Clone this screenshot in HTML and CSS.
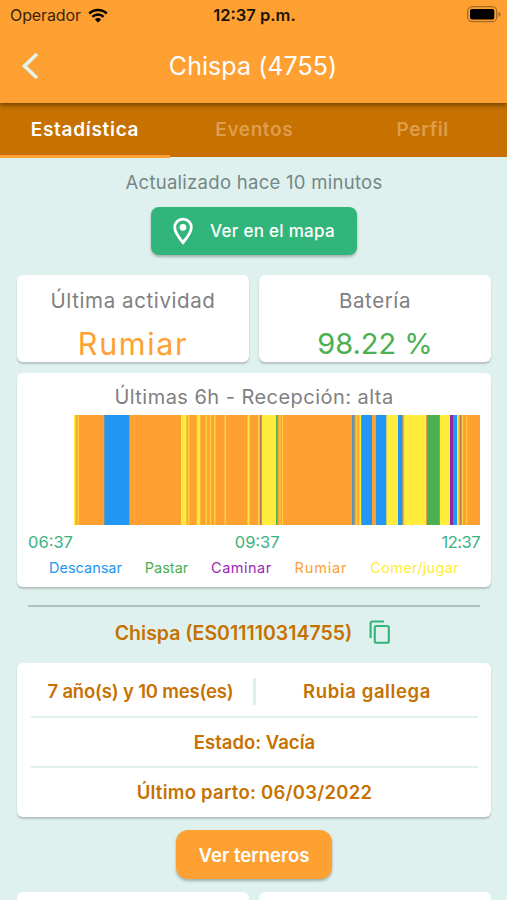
FILE: index.html
```html
<!DOCTYPE html>
<html lang="es">
<head>
<meta charset="utf-8">
<title>Chispa (4755)</title>
<link rel="stylesheet" href="styles.css">
</head>
<body>
<header class="header">
  <div class="status">
    <div class="carrier"><span class="operator">Operador</span>
      <svg width="20" height="15" viewBox="0 0 20 15"><g fill="none" stroke="#000" stroke-width="2.5"><path d="M1.2 5.5a12.6 12.6 0 0 1 17.6 0"/><path d="M4.4 8.8a8 8 0 0 1 11.2 0"/></g><path d="M10 14.6l-3.1-3.2a4.4 4.4 0 0 1 6.2 0z"/></svg>
    </div>
    <span class="clock">12:37 p.m.</span>
    <svg class="battery" width="34" height="17" viewBox="0 0 34 17"><rect x=".7" y=".7" width="29" height="15" rx="4.5" fill="none" stroke="#a86a22" stroke-width="1.3"/><rect x="3" y="3" width="24.3" height="10.4" rx="2"/><path d="M31.5 5.8q2 .5 2 2.5t-2 2.5z" fill="#a86a22"/></svg>
  </div>
  <div class="appbar">
    <svg class="back" width="20" height="28" viewBox="0 0 20 28"><path d="M18 2L5.500 14l12.500 12" fill="none" stroke="#e3f3ee" stroke-width="3.600"/></svg>
    <h1 class="title">Chispa (4755)</h1>
  </div>
</header>
<nav class="tabs">
  <span class="tab active">Estadística</span>
  <span class="tab">Eventos</span>
  <span class="tab">Perfil</span>
</nav>
<main class="content">
  <p class="updated">Actualizado hace 10 minutos</p>
  <button class="map-btn">
    <svg width="20" height="28" viewBox="0 0 20 28"><path d="M10 2.100c-4.700 0-8.300 3.500-8.300 8.200 0 5.600 8.300 15.200 8.300 15.200s8.300-9.600 8.300-15.200c0-4.700-3.600-8.200-8.300-8.200z" fill="none" stroke="#fff" stroke-width="2.800"/><circle cx="10" cy="10.300" r="3.400" fill="#fff"/></svg>
    <span>Ver en el mapa</span>
  </button>
  <section class="pair">
    <div class="card metric"><span class="label">Última actividad</span><span class="value v-act">Rumiar</span></div>
    <div class="card metric"><span class="label">Batería</span><span class="value v-bat">98.22 %</span></div>
  </section>
  <section class="card chart-card">
    <h2 class="chart-title">Últimas 6h - Recepción: alta</h2>
    <svg class="chart" width="406" height="110" viewBox="74 0 406 110" preserveAspectRatio="none">
      <rect x="74" width="406" height="110" fill="#ffa033"/>
      <g fill="#ffeb3b">
        <rect x="74" width="1.500" height="110"/><rect x="181" width="5.500" height="110"/><rect x="196.700" width="3.600" height="110"/>
        <rect x="247.500" width="2" height="110"/><rect x="262" width="14" height="110"/><rect x="359.300" width="2" height="110"/>
        <rect x="386" width="12" height="110"/><rect x="402.500" width="24" height="110"/><rect x="440" width="10" height="110"/><rect x="457" width="1.700" height="110"/>
      </g>
      <g fill="#ffd03c">
        <rect x="77.500" width="1.500" height="110"/><rect x="188" width="1.500" height="110"/><rect x="205.500" width="1.500" height="110"/>
        <rect x="209.700" width="1.600" height="110"/><rect x="214" width="1.500" height="110"/><rect x="224.500" width="1.500" height="110"/>
        <rect x="258" width="1.500" height="110"/><rect x="279.500" width="1" height="110"/><rect x="282" width="1" height="110"/>
        <rect x="356" width="1.200" height="110"/><rect x="462" width="1" height="110"/><rect x="466" width="1.200" height="110"/>
      </g>
      <g fill="#2196f3">
        <rect x="104.300" width="25" height="110"/><rect x="361.300" width="10.700" height="110"/><rect x="376" width="10.300" height="110"/>
        <rect x="398" width="4.500" height="110"/><rect x="453" width="4" height="110"/>
      </g>
      <rect x="352" width="2.500" height="110" fill="#5795b8"/>
      <g fill="#4caf50"><rect x="276" width="1.500" height="110"/><rect x="428" width="11.700" height="110"/></g>
      <g fill="#b97865"><rect x="260" width="1.500" height="110"/><rect x="426.500" width="1.500" height="110"/><rect x="402.500" width="1" height="110"/><rect x="460" width="1.300" height="110"/></g>
      <rect x="450" width="3" height="110" fill="#9027a5"/>
    </svg>
    <div class="times"><span>06:37</span><span>09:37</span><span class="t-end">12:37</span></div>
    <div class="legend"><span class="rest">Descansar</span><span class="graze">Pastar</span><span class="walk">Caminar</span><span class="rumi">Rumiar</span><span class="eat">Comer/jugar</span></div>
  </section>
  <hr class="divider">
  <div class="animal">
    <span>Chispa (ES011110314755)</span>
    <svg width="22" height="26" viewBox="0 0 22 26"><g fill="none" stroke="#32b57b" stroke-width="2.100"><path d="M1.600 18V3.200q0-1.700 1.700-1.700H15"/><rect x="5.800" y="6" width="14" height="16.800" rx="1.500"/></g></svg>
  </div>
  <section class="card info">
    <div class="info-row split"><span class="age">7 año(s) y 10 mes(es)</span><span class="breed">Rubia gallega</span></div>
    <div class="info-row">Estado: Vacía</div>
    <div class="info-row calving">Último parto: 06/03/2022</div>
  </section>
  <button class="calves-btn">Ver terneros</button>
  <section class="pair next"><div class="card"></div><div class="card"></div></section>
</main>
</body>
</html>
```
FILE: styles.css
```css
* { box-sizing: border-box; }
body {
  margin: 0;
  width: 507px;
  height: 900px;
  overflow: hidden;
  background: #dff1ee;
  font-family: Inter, "Liberation Sans", sans-serif;
  white-space: nowrap;
}
h1, h2, p { margin: 0; font-weight: 400; }
svg { display: block; flex: none; }
button { border: 0; font-family: inherit; color: #fff; }

.header {
  position: relative;
  height: 103px;
  background: #ffa033;
  box-shadow: 0 2px 5px rgba(0, 0, 0, .45);
}
.status {
  display: grid;
  grid-template-columns: 1fr auto 1fr;
  align-items: center;
  height: 30px;
  padding: 0 8px 0 10px;
}
.carrier { display: flex; align-items: center; gap: 7px; }
.operator { font-size: 16px; letter-spacing: -.1px; color: #3a250c; }
.clock { font-size: 16.5px; font-weight: 600; color: #1c1206; }
.battery { justify-self: end; margin: -2px -2px 0 0; }
.appbar {
  display: grid;
  grid-template-columns: 40px 1fr 40px;
  align-items: center;
  height: 72px;
  padding: 0 20px 0 19px;
}
.title { text-align: center; font-size: 25px; letter-spacing: .05px; color: #fff; }

.tabs {
  display: grid;
  grid-template-columns: 170px 1fr 1fr;
  height: 54px;
  background: #c67100;
}
.tab {
  padding-top: 1px;
  text-align: center;
  font-size: 19px;
  font-weight: 600;
  line-height: 51px;
  letter-spacing: .6px;
  color: #df9d4c;
}
.tab.active { color: #fff; border-bottom: 3px solid #ffa033; letter-spacing: .7px; }

.content { display: flex; flex-direction: column; align-items: center; padding: 0 16px 0 17px; }
.updated { margin-top: 13px; font-size: 18.5px; line-height: 24px; letter-spacing: .28px; color: #748784; }
.map-btn {
  display: flex;
  align-items: center;
  gap: 17px;
  width: 206px;
  height: 48px;
  margin-top: 13px;
  padding: 0 22px;
  border-radius: 8px;
  background: #32b57b;
  box-shadow: 0 2px 3px rgba(0, 0, 0, .28);
  font-size: 17px;
  font-weight: 500;
  letter-spacing: .29px;
}
.card {
  border-radius: 6px;
  background: #fff;
  box-shadow: 0 2px 2px rgba(0, 0, 0, .2);
}
.pair { display: grid; grid-template-columns: 1fr 1fr; gap: 10px; width: 474px; margin-top: 20px; }
.metric { display: flex; flex-direction: column; align-items: center; height: 87px; }
.label { margin-top: 13px; font-size: 20.5px; line-height: 26px; letter-spacing: .6px; color: #808080; }
.value { margin-top: 12px; font-size: 29px; line-height: 36px; }
.v-act { color: #ffa033; font-size: 30.5px; letter-spacing: 1.65px; }
.v-bat { color: #4caf50; }

.chart-card { width: 474px; height: 214px; margin-top: 11px; padding: 0 11px; }
.chart-title { margin-top: 11px; text-align: center; font-size: 20px; line-height: 26px; letter-spacing: .46px; color: #808080; }
.chart { margin: 5px 0 0 46px; }
.times {
  display: flex;
  justify-content: space-between;
  margin-top: 6px;
  font-size: 16.5px;
  line-height: 22px;
  color: #3ab27f;
}
.t-end { letter-spacing: -.5px; }
.legend { display: flex; justify-content: space-between; padding: 0 21px 0 21px; margin-top: 4px; font-size: 14.5px; line-height: 22px; }
.rest { color: #2196f3; }
.graze { color: #4caf50; }
.walk { color: #9c27b0; letter-spacing: .5px; }
.rumi { color: #ffa033; letter-spacing: .85px; }
.eat { color: #ffeb3b; letter-spacing: .32px; }

.divider { width: 452px; height: 2px; margin: 18px 0 0; border: 0; background: #adc1be; }
.animal {
  display: flex;
  align-items: center;
  gap: 17px;
  height: 26px;
  margin: 13px 2px 0 0;
  font-size: 19.5px;
  font-weight: 600;
  color: #c67100;
}
.info {
  width: 474px;
  height: 154px;
  margin-top: 17px;
  padding: 4px 13px 0 14px;
  text-align: center;
  font-size: 18.5px;
  font-weight: 600;
  color: #c67100;
}
.info-row { line-height: 48px; border-bottom: 2px solid #dff1ee; }
.calving { border: 0; letter-spacing: .25px; }
.split { display: grid; grid-template-columns: 222px 1fr; align-items: center; height: 51px; }
.age { letter-spacing: -.18px; padding-right: 3px; line-height: 45px; }
.breed { border-left: 3px solid #dff1ee; line-height: 27px; letter-spacing: .6px; }
.calves-btn {
  width: 156px;
  height: 49px;
  margin-top: 13px;
  padding: 0;
  border-radius: 12px;
  background: #ffa033;
  box-shadow: 0 2px 3px rgba(0, 0, 0, .28);
  font-size: 18.5px;
  font-weight: 600;
}
.next { margin-top: 13px; }
.next .card { height: 8px; border-radius: 6px 6px 0 0; box-shadow: none; }
```
